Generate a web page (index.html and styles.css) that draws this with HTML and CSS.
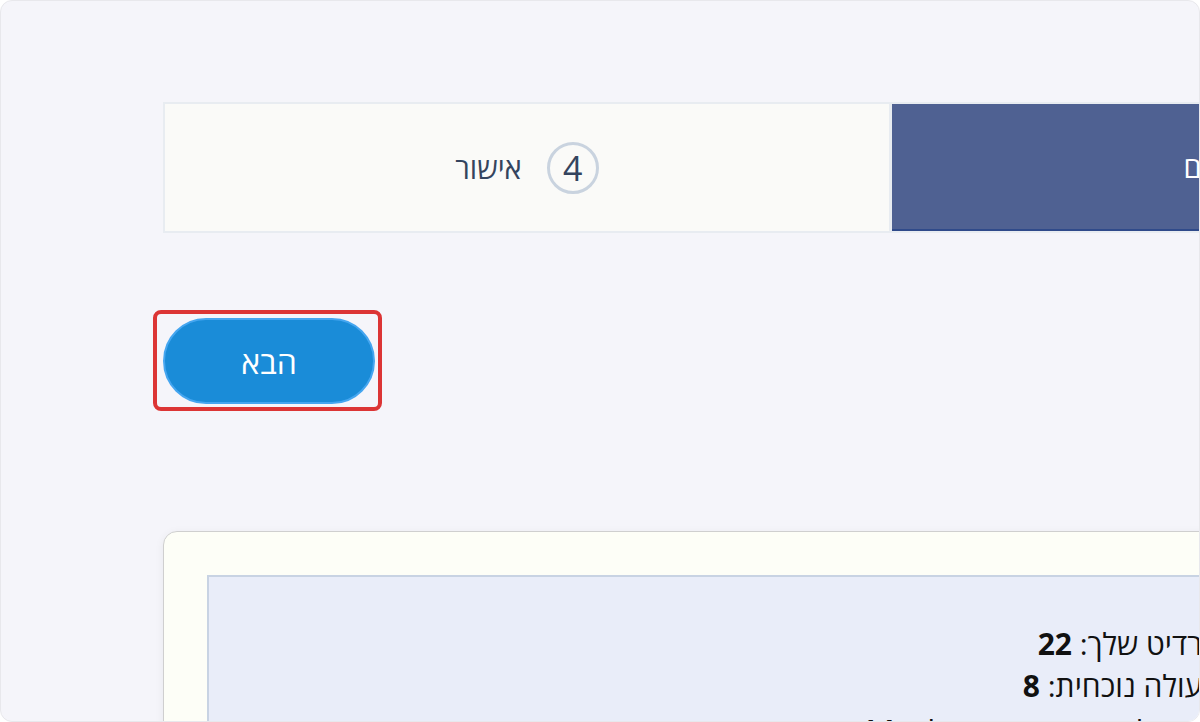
FILE: index.html
```html
<!DOCTYPE html>
<html lang="he">
<head>
<meta charset="utf-8">
<link rel="stylesheet" href="styles.css">
</head>
<body>
<div class="frame">
  <div class="content">
    <div class="stepper">
      <div class="step"><span class="num">1</span><span class="label">פרטים</span></div>
      <div class="step"><span class="num">2</span><span class="label">בחירה</span></div>
      <div class="step active"><span class="num">3</span><span class="label">סיכום</span></div>
      <div class="step"><span class="num">4</span><span class="label">אישור</span></div>
    </div>
    <div class="btn-row">
      <div class="highlight">
        <button class="next-btn">הבא</button>
      </div>
    </div>
    <div class="card">
      <div class="info">
        <p class="line">קרדיט שלך: <b>22</b></p>
        <p class="line">פעולה נוכחית: <b>8</b></p>
        <p class="line last">יתרה לאחר ביצוע הפעולה: <b>14</b></p>
      </div>
    </div>
  </div>
</div>
</body>
</html>
```

FILE: styles.css
```css
html, body {
  margin: 0;
  padding: 0;
  background: #ffffff;
}
body {
  font-family: "Open Sans", "DejaVu Sans", sans-serif;
}
.frame {
  box-sizing: border-box;
  width: 1200px;
  height: 722px;
  border: 1px solid #e8e8ec;
  border-radius: 12px;
  background: #f5f5fa;
  overflow: hidden;
}
.content {
  width: 2600px;
  padding: 101px 0 0 162px;
  display: flex;
  flex-direction: column;
  align-items: flex-start;
}
.stepper {
  display: flex;
  flex-direction: row-reverse;
  gap: 3px;
  padding: 2px;
  background: #e8ecf1;
}
.step {
  width: 724px;
  height: 127px;
  box-sizing: border-box;
  background: #fafaf8;
  display: flex;
  flex-direction: row-reverse;
  align-items: center;
  justify-content: center;
  gap: 25px;
  direction: ltr;
}
.num {
  box-sizing: border-box;
  width: 52px;
  height: 52px;
  border-radius: 50%;
  border: 3px solid #c9d3df;
  display: flex;
  align-items: center;
  justify-content: center;
  font-size: 34px;
  color: #34445e;
  line-height: 1;
}
.label {
  font-size: 29px;
  color: #34445e;
  direction: rtl;
}
.step.active {
  background: #4f6192;
  border-bottom: 2px solid #2f4a8a;
}
.step.active .num {
  color: #ffffff;
  border-color: #ffffff;
  background: #4f6192;
}
.step.active .label {
  color: #ffffff;
}
.btn-row {
  margin-top: 77px;
  margin-left: -10px;
}
.highlight {
  border: 4px solid #dc3535;
  border-radius: 8px;
  padding: 4px 3px 3px 6px;
}
.next-btn {
  display: block;
  width: 212px;
  height: 86px;
  border-radius: 43px;
  border: 2px solid #45a6f0;
  background: #1a8cd8;
  color: #ffffff;
  font-family: "Open Sans", "DejaVu Sans", sans-serif;
  font-size: 32px;
  direction: rtl;
  cursor: pointer;
}
.card {
  margin-top: 120px;
  width: 1143px;
  box-sizing: border-box;
  background: #fdfef7;
  border: 1px solid #cfcfcf;
  border-radius: 14px 14px 0 0;
  padding: 43px 43px 0 43px;
  box-shadow: 0 2px 10px rgba(0, 0, 0, 0.06);
}
.info {
  background: #e9edf9;
  border: 2px solid #c8d3e3;
  padding: 46px 40px 20px 40px;
  direction: rtl;
  text-align: right;
}
.line {
  margin: 0;
  font-size: 30px;
  line-height: 42px;
  color: #111111;
}
.line.last {
  margin-top: 3px;
}
.line b {
  font-weight: 700;
}
```
